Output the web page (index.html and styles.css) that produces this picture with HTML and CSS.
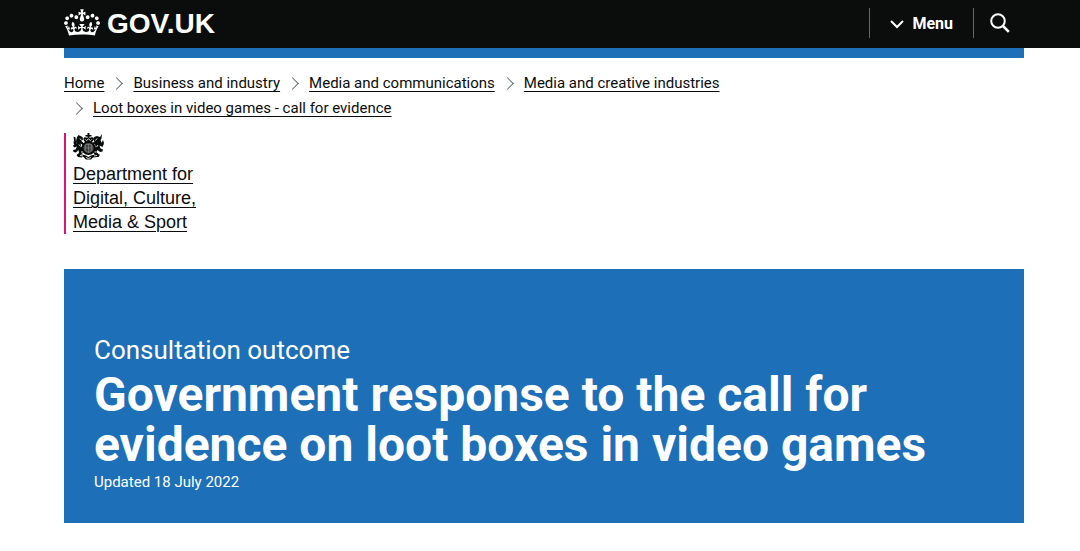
FILE: index.html
```html
<!DOCTYPE html>
<html lang="en">
<head>
<meta charset="utf-8">
<meta name="viewport" content="width=device-width, initial-scale=1">
<title>Government response to the call for evidence on loot boxes in video games - GOV.UK</title>
<link rel="stylesheet" href="styles.css">
</head>
<body>
<header class="site-header">
  <div class="container site-header__inner">
    <a class="logo" href="#">
      <svg class="logo__crown" viewBox="0 0 132 97" aria-hidden="true"><path fill="currentColor" d="M25 30.2c3.5 1.5 7.7-.2 9.1-3.7 1.5-3.6-.2-7.8-3.9-9.2-3.6-1.4-7.6.3-9.1 3.9-1.4 3.5.3 7.5 3.9 9zM9 39.5c3.6 1.5 7.8-.2 9.2-3.7 1.5-3.6-.2-7.8-3.9-9.1-3.6-1.5-7.6.2-9.1 3.8-1.4 3.5.3 7.5 3.8 9zM4.4 57.2c3.5 1.5 7.7-.2 9.1-3.8 1.5-3.6-.2-7.7-3.9-9.1-3.5-1.5-7.6.3-9.1 3.8-1.4 3.5.3 7.6 3.9 9.1zm38.3-21.4c3.5 1.5 7.7-.2 9.1-3.8 1.5-3.6-.2-7.7-3.9-9.1-3.6-1.5-7.6.3-9.1 3.8-1.3 3.6.4 7.7 3.9 9.1zm64.4-5.6c-3.6 1.5-7.8-.2-9.1-3.7-1.5-3.6.2-7.8 3.8-9.2 3.6-1.4 7.7.3 9.2 3.9 1.3 3.5-.4 7.5-3.9 9zm15.9 9.3c-3.6 1.5-7.7-.2-9.1-3.7-1.5-3.6.2-7.8 3.7-9.1 3.6-1.5 7.7.2 9.2 3.8 1.5 3.5-.3 7.5-3.8 9zm4.7 17.7c-3.6 1.5-7.8-.2-9.2-3.8-1.5-3.6.2-7.7 3.9-9.1 3.6-1.5 7.7.3 9.2 3.8 1.3 3.5-.4 7.6-3.9 9.1zM89.3 35.8c-3.6 1.5-7.8-.2-9.2-3.8-1.4-3.6.2-7.7 3.9-9.1 3.6-1.5 7.7.3 9.2 3.8 1.4 3.6-.3 7.7-3.9 9.1zM69.7 17.7l8.9 4.7V9.3l-8.9 2.8c-.2-.3-.5-.6-.9-.9L72.4 0H59.6l3.5 11.2c-.3.3-.6.5-.9.9l-8.8-2.8v13.1l8.8-4.7c.3.3.6.7.9.9l-5 15.4v.1c-.2.8-.4 1.6-.4 2.4 0 4.1 3.1 7.5 7 8.1h.2c.3 0 .7.1 1 .1.4 0 .7 0 1-.1h.2c4-.6 7.1-4.1 7.1-8.1 0-.8-.1-1.7-.4-2.4V34l-5.1-15.4c.4-.2.7-.6 1-.9zM66 92.8c16.9 0 32.8 1.1 47.1 3.2 4-16.9 8.9-26.7 14-33.5l-9.6-3.4c1 4.9 1.1 7.2 0 10.2-1.5-1.4-3-4.3-4.2-8.7L108.6 76c2.8-2 5-3.2 7.5-3.3-4.4 9.4-10 11.9-13.6 11.2-4.3-.8-6.3-4.6-5.6-7.9 1-4.7 5.7-5.9 8-.5 4.3-8.7-3-11.4-7.6-8.8 7.1-7.2 7.9-13.5 2.1-21.1-8 6.1-8.1 12.3-4.5 20.8-4.7-5.4-12.1-2.5-9.5 6.2 3.4-5.2 7.9-2 7.2 3.1-.6 4.3-6.4 7.8-13.5 7.2-10.3-.9-10.9-8-11.2-13.8 2.5-.5 7.1 1.8 11 7.3L80.2 60c-4.1 4.4-8 5.3-12.3 5.4 1.4-4.4 8-11.6 8-11.6H55.5s6.4 7.2 7.9 11.6c-4.2-.1-8-1-12.3-5.4l1.4 16.4c3.9-5.5 8.5-7.7 10.9-7.3-.3 5.8-.9 12.8-11.1 13.8-7.2.6-12.9-2.9-13.5-7.2-.7-5 3.8-8.3 7.1-3.1 2.7-8.7-4.6-11.6-9.4-6.2 3.7-8.5 3.6-14.7-4.6-20.8-5.8 7.6-5 13.9 2.2 21.1-4.7-2.6-11.9.1-7.7 8.8 2.3-5.5 7.1-4.2 8.1.5.7 3.3-1.3 7.1-5.7 7.9-3.5.7-9-1.8-13.5-11.2 2.5.1 4.7 1.3 7.5 3.3l-4.7-15.4c-1.2 4.4-2.7 7.2-4.3 8.7-1.1-3-.9-5.3 0-10.2l-9.5 3.4c5 6.9 9.9 16.7 14 33.5 14.8-2.1 30.8-3.2 47.7-3.2z"/></svg>
      <span>GOV.UK</span>
    </a>
    <div class="site-header__actions">
      <button class="menu-button" type="button">
        <svg class="menu-button__icon" viewBox="0 0 14 10" aria-hidden="true"><path d="M1 2l6 6 6-6" fill="none" stroke="currentColor" stroke-width="2"/></svg>
        <span>Menu</span>
      </button>
      <button class="search-button" type="button" aria-label="Search GOV.UK">
        <svg class="search-button__icon" viewBox="0 0 20 20" aria-hidden="true"><g fill="none" stroke="currentColor"><circle cx="8" cy="8" r="6.8" stroke-width="2"/><path d="M13 13l5.8 5.8" stroke-width="2.6"/></g></svg>
      </button>
    </div>
  </div>
</header>
<div class="container">
  <div class="blue-bar"></div>
  <nav aria-label="Breadcrumb">
    <ol class="breadcrumbs">
      <li><a href="#">Home</a></li>
      <li><a href="#">Business and industry</a></li>
      <li><a href="#">Media and communications</a></li>
      <li><a href="#">Media and creative industries</a></li>
      <li><a href="#">Loot boxes in video games - call for evidence</a></li>
    </ol>
  </nav>
  <main>
    <div class="department">
      <svg class="department__crest" viewBox="0 0 62 54" aria-hidden="true">
        <g fill="#0b0c0c">
          <path d="M29 0h4v4h4v3h-4v3h-4V7h-4V4h4z"/>
          <path d="M22 9c4-2 6 1 9 1s5-3 9-1c3 3 0 6-2 9H24c-2-3-5-6-2-9z"/>
          <path d="M8 8l3-4 4 2 4 2 1 5-3 3 5 5-1 4-6-4 2 7 4 6-1 6-5 3 5 3-2 3-8-1-3-4 5-4-1-6-5 5-5-1-1-4 5-1 3-6-6 2-2-4 7-4-1-5z"/>
          <path d="M1 7l4 2 1 8 2 7-4 3-3-7 1-6z"/>
          <path d="M54 8l4-6-1 9-2 3 2 5 4 4-2 5-6-3 2 6 5 2-1 4-5 1-5-4-2 4 5 5-3 5-8 1-2-3 5-3-4-4 1-6 4-5-1-6-6 4-1-4 6-5-3-4 2-5 6-2z"/>
          <path d="M60 14l2 6-2 5-3-5zM8 43h10l8 2 5 3 5-3 8-2h10l-3 5-9-1-6 6H26l-6-6-9 1z"/>
        </g>
        <circle cx="31" cy="30" r="12" fill="#555" stroke="#0b0c0c" stroke-width="4"/>
        <path d="M25 23h12v11l-6 6-6-6z" fill="#333" stroke="#999" stroke-width="1"/>
        <path d="M25 30h12M31 23v16M27 26h2M33 26h3M33 34h3" stroke="#aaa" stroke-width="1"/>
        <path d="M25 13l2 2 4-3 4 3 2-2M14 11l3 4M12 23l3 4M48 11l-3 4M50 24l-3 4M16 38h4M43 38h4M26 49l5 2 5-2M14 45l6 1M48 45l-6 1" fill="none" stroke="#ddd" stroke-width="2"/>
      </svg>
      <a href="#">Department for<br>Digital, Culture,<br>Media &amp; Sport</a>
    </div>
    <section class="banner">
      <p class="banner__context">Consultation outcome</p>
      <h1 class="banner__title">Government response to the call for evidence on loot boxes in video games</h1>
      <p class="banner__updated">Updated 18 July 2022</p>
    </section>
  </main>
</div>
</body>
</html>
```
FILE: styles.css
```css
* { box-sizing: border-box; }

body {
  margin: 0;
  background: #fff;
  color: #0b0c0c;
  font-family: Roboto, "Liberation Sans", sans-serif;
}

a { color: inherit; }

.container {
  max-width: 1080px;
  margin: 0 auto;
  padding: 0 56px 0 64px;
}

.site-header { background: #0b0c0c; color: #fff; }

.site-header__inner {
  display: flex;
  align-items: center;
  justify-content: space-between;
  height: 48px;
}

.logo {
  display: flex;
  align-items: flex-start;
  gap: 7px;
  font: bold 28px/32px "Liberation Sans", Arial, sans-serif;
  text-decoration: none;
}

.logo__crown { width: 36px; height: 27px; margin-top: 1px; }

.site-header__actions { display: flex; align-items: center; padding-bottom: 2px; }

.menu-button,
.search-button {
  display: flex;
  align-items: center;
  height: 30px;
  padding: 0 20px;
  border: 0;
  border-left: 1px solid #626a6e;
  background: none;
  color: inherit;
  font: bold 16px/20px Roboto, sans-serif;
}

.menu-button { gap: 8px; padding-top: 1px; }
.menu-button__icon { width: 14px; height: 10px; }
.search-button { width: 51px; padding: 0 0 0 16px; }
.search-button__icon { width: 20px; height: 20px; }

.blue-bar { height: 10px; background: #1d70b8; }

.breadcrumbs {
  display: flex;
  flex-wrap: wrap;
  max-width: 760px;
  margin: 0;
  padding: 13px 0 0;
  list-style: none;
  font-size: 15px;
  line-height: 25px;
}

.breadcrumbs li { display: flex; align-items: center; }

.breadcrumbs li + li::before {
  content: "";
  width: 8px;
  height: 8px;
  margin: 0 12px 0 8px;
  border: solid #626a6e;
  border-width: 1px 1px 0 0;
  transform: rotate(45deg);
}

.breadcrumbs a { text-underline-offset: 3px; text-decoration-thickness: 1px; }

.department {
  margin-top: 12px;
  padding-left: 7px;
  border-left: 2px solid #d9127e;
  font: 18px/24px "Liberation Sans", Arial, sans-serif;
}

.department__crest { display: block; width: 31px; height: 27px; margin-bottom: 2px; }

.department a { text-underline-offset: 3px; text-decoration-thickness: 1px; }

.banner {
  margin-top: 35px;
  padding: 64px 30px 29px;
  background: #1d70b8;
  color: #fff;
}

.banner p,
.banner h1 { margin: 0; }

.banner .banner__context { font-size: 26px; line-height: 34px; }
.banner .banner__title { margin-top: 3px; font-size: 48px; line-height: 50px; }
.banner .banner__updated { font-size: 15px; line-height: 24px; }
```
